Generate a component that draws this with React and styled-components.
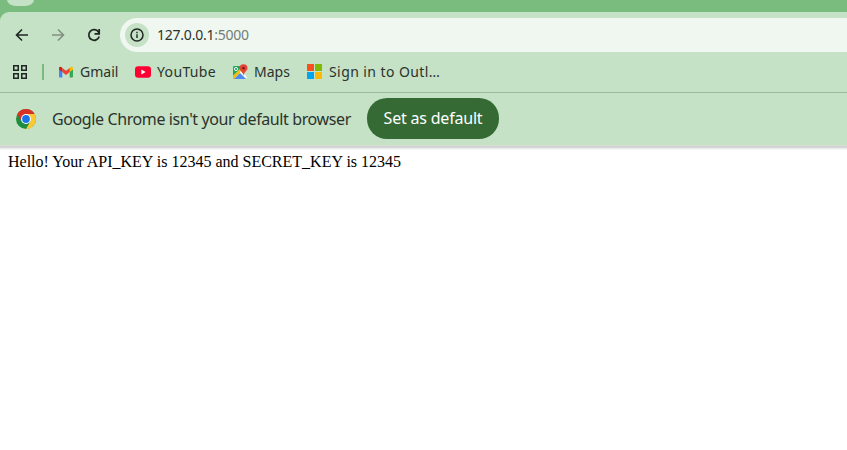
import React from 'react';
import styled, { createGlobalStyle } from 'styled-components';

const Global = createGlobalStyle`
  * { box-sizing: border-box; }
  html, body { margin: 0; background: #fff; overflow: hidden; }
`;
const Browser = styled.div`
  height: 450px;
  background: #fff;
  font-family: 'Noto Sans', sans-serif;
  color: #2b332d;
  overflow: hidden;
  svg { display: block; flex: none; }
`;
const TabStrip = styled.div`
  height: 20px;
  margin-bottom: -8px;
  background: #79bc7d;
  padding-left: 7px;
`;
const Tab = styled.div`
  width: 27px;
  height: 6px;
  border-radius: 0 0 9px 9px / 0 0 6px 6px;
  background: #c5e1c6;
`;
const Toolbar = styled.header`
  position: relative;
  height: 40px;
  padding: 6px 0 0 14px;
  display: flex;
  background: #c5e1c6;
  border-top-left-radius: 9px;
`;
const NavButtons = styled.nav`
  display: flex;
  gap: 20px;
  width: 106px;
  height: 34px;
  align-items: center;
`;
const AddressBar = styled.div`
  flex: 1;
  height: 34px;
  padding-left: 5px;
  border-radius: 17px 0 0 17px;
  background: #f0f7f1;
  display: flex;
  align-items: center;
`;
const SiteInfo = styled.span`
  width: 24px;
  height: 24px;
  margin-right: 8px;
  border-radius: 50%;
  background: #c5e1c6;
  display: grid;
  place-items: center;
`;
const Label = styled.span`
  font-size: ${p => p.$size || 14}px;
  line-height: 20px;
  letter-spacing: ${p => p.$track || 0}px;
  white-space: pre;
`;
const Port = styled.span`
  color: #727d74;
`;
const Bookmarks = styled.div`
  height: 41px;
  padding: 0 0 1px 12px;
  border-bottom: 1px solid #9fb7a1;
  background: #c5e1c6;
  display: flex;
  align-items: center;
`;
const Divider = styled.span`
  width: 2px;
  height: 16px;
  margin: 0 14px;
  background: #79bc7d;
`;
const Bookmark = styled.span`
  width: ${p => p.$width}px;
  display: flex;
  align-items: center;
  gap: 6px;
`;
const InfoBar = styled.section`
  height: 52px;
  padding: 0 0 0 16px;
  background: #c5e1c6;
  display: flex;
  align-items: center;
`;
const Message = styled.span`
  width: 315px;
  margin-left: 16px;
`;
const DefaultButton = styled.button`
  width: 132px;
  height: 41px;
  margin-bottom: 1px;
  padding: 0 0 1px;
  border: 0;
  border-radius: 20px;
  background: #356a35;
  color: #fff;
  font-family: inherit;
  text-align: center;
`;
const Shadow = styled.div`
  height: 8px;
  background: linear-gradient(#d8e0d6 0 1px, #cfcfcf 1px 2px, #d9d9d9 2px 3px, #e9e9e9 3px 4px, #f6f6f6 4px 5px, #fff 5px);
`;
const PageText = styled.main`
  padding: 0 8px;
  font: 16px/18px 'Liberation Serif', serif;
  color: #000;
`;

const Back = () => <svg width="16" height="16" viewBox="0 0 16 16" fill="none" stroke="#202622" strokeWidth="1.6"><path d="M14 8H3M8 2.5 2.5 8 8 13.5" /></svg>;
const Forward = () => <svg width="16" height="16" viewBox="0 0 16 16" fill="none" stroke="#82917f" strokeWidth="1.6"><path d="M2 8h11M8 2.5 13.5 8 8 13.5" /></svg>;
const Reload = () => <svg width="16" height="16" viewBox="0 0 16 16" fill="none" stroke="#202622" strokeWidth="1.7"><path d="M13.2 9.4A5.3 5.3 0 1 1 12.5 5L13 6M13.2 2v4.8H8.5" /></svg>;
const Info = () => <svg width="16" height="16" viewBox="0 0 16 16"><circle cx="8" cy="8" r="6" fill="none" stroke="#202622" strokeWidth="1.5" /><path d="M7.3 7.2h1.4V11H7.3zM7.3 4.8h1.4v1.4H7.3z" fill="#202622" /></svg>;
const Apps = () => (
  <svg width="16" height="16" viewBox="0 0 16 16" fill="none" stroke="#202622" strokeWidth="1.5">
    <path d="M1.75 1.75h4.5v4.5h-4.5zM9.75 1.75h4.5v4.5h-4.5zM1.75 9.75h4.5v4.5h-4.5zM9.75 9.75h4.5v4.5h-4.5z" />
  </svg>
);
const Gmail = () => (
  <svg width="16" height="16" viewBox="0 0 16 16">
    <path fill="#4285f4" d="M1 5.3 4.3 7.6V13.5H2.2Q1 13.5 1 12.3Z" />
    <path fill="#34a853" d="M11.7 7.6 15 5.3v7q0 1.2-1.2 1.2h-2.1z" />
    <path fill="#fbbc04" d="M11.7 4 12.7 3Q15 2 15 4.3v1.3l-3.3 2.5z" />
    <path fill="#ea4335" d="m4.3 4 3.7 2.8L11.7 4v4.1L8 10.9 4.3 8.1z" />
    <path fill="#c5221f" d="M1 5.6V4.3Q1 2 3.3 3l1 1v4.1z" />
  </svg>
);
const YouTube = () => <svg width="16" height="16" viewBox="0 0 16 16"><rect y="2.3" width="16" height="11.4" rx="3.2" fill="#ff0033" /><path d="m6.4 5.5 4.2 2.5-4.2 2.5z" fill="#fff" /></svg>;
const Maps = () => (
  <svg width="16" height="16" viewBox="0 0 16 16">
    <path fill="#26a65b" d="M2 2h9L1 12V3q0-1 1-1z" />
    <path fill="#e8eaed" d="M9 7 14 12v2q0 1-1 1h-1L7 10z" />
    <path fill="#4c8bf5" d="m3 14 5-5 6 6H2.5q-1.2 0-1.5-1z" />
    <path fill="#fbbc04" d="m1 12 9-9 1 2.2L2 15q-1-.3-1-1z" />
    <path fill="#fff" d="m7.7 8.3 1.2-1.2 5.9 5.9v1.5z" />
    <circle cx="4" cy="5" r="1.6" fill="none" stroke="#fff" strokeWidth=".9" />
    <path fill="#e84435" d="M11.5.2a4 4 0 0 1 4 4c0 2.6-3 3.2-4 7.2-1-4-4-4.6-4-7.2a4 4 0 0 1 4-4z" />
    <circle cx="11.5" cy="4.2" r="1.4" fill="#7d231e" />
  </svg>
);
const Microsoft = () => (
  <svg width="16" height="16" viewBox="0 0 16 16">
    <path fill="#f8501f" d="M0 0h7v7H0z" /><path fill="#80bb03" d="M8 0h7v7H8z" />
    <path fill="#03a5f0" d="M0 8h7v7H0z" /><path fill="#ffb904" d="M8 8h7v7H8z" />
  </svg>
);
const Chrome = () => (
  <svg width="20" height="20" viewBox="0 0 20 20">
    <circle cx="10" cy="10" r="10" fill="#1e8e3e" />
    <path fill="#fcc934" d="M10 5h8.66A10 10 0 0 1 10 20l4.33-7.5z" />
    <path fill="#d93025" d="M1.34 5A10 10 0 0 1 18.66 5H10L5.67 12.5z" />
    <circle cx="10" cy="10" r="5" fill="#fff" />
    <circle cx="10" cy="10" r="3.9" fill="#1a73e8" />
  </svg>
);

export default function App() {
  return (
    <Browser>
      <Global />
      <TabStrip><Tab /></TabStrip>
      <Toolbar>
        <NavButtons><Back /><Forward /><Reload /></NavButtons>
        <AddressBar>
          <SiteInfo><Info /></SiteInfo>
          <Label $size={14} $track={-0.23}>127.0.0.1<Port>:5000</Port></Label>
        </AddressBar>
      </Toolbar>
      <Bookmarks>
        <Apps />
        <Divider />
        <Bookmark $width={77}><Gmail /><Label>Gmail</Label></Bookmark>
        <Bookmark $width={97}><YouTube /><Label $track={0.35}>YouTube</Label></Bookmark>
        <Bookmark $width={75}><Maps /><Label>Maps</Label></Bookmark>
        <Bookmark $width={140}><Microsoft /><Label $track={0.42}>Sign in to Outl…</Label></Bookmark>
      </Bookmarks>
      <InfoBar>
        <Chrome />
        <Message><Label $size={16} $track={-0.39}>Google Chrome isn't your default browser</Label></Message>
        <DefaultButton><Label $size={16} $track={-0.2}>Set as default</Label></DefaultButton>
      </InfoBar>
      <Shadow />
      <PageText>Hello! Your API_KEY is 12345 and SECRET_KEY is 12345</PageText>
    </Browser>
  );
}
